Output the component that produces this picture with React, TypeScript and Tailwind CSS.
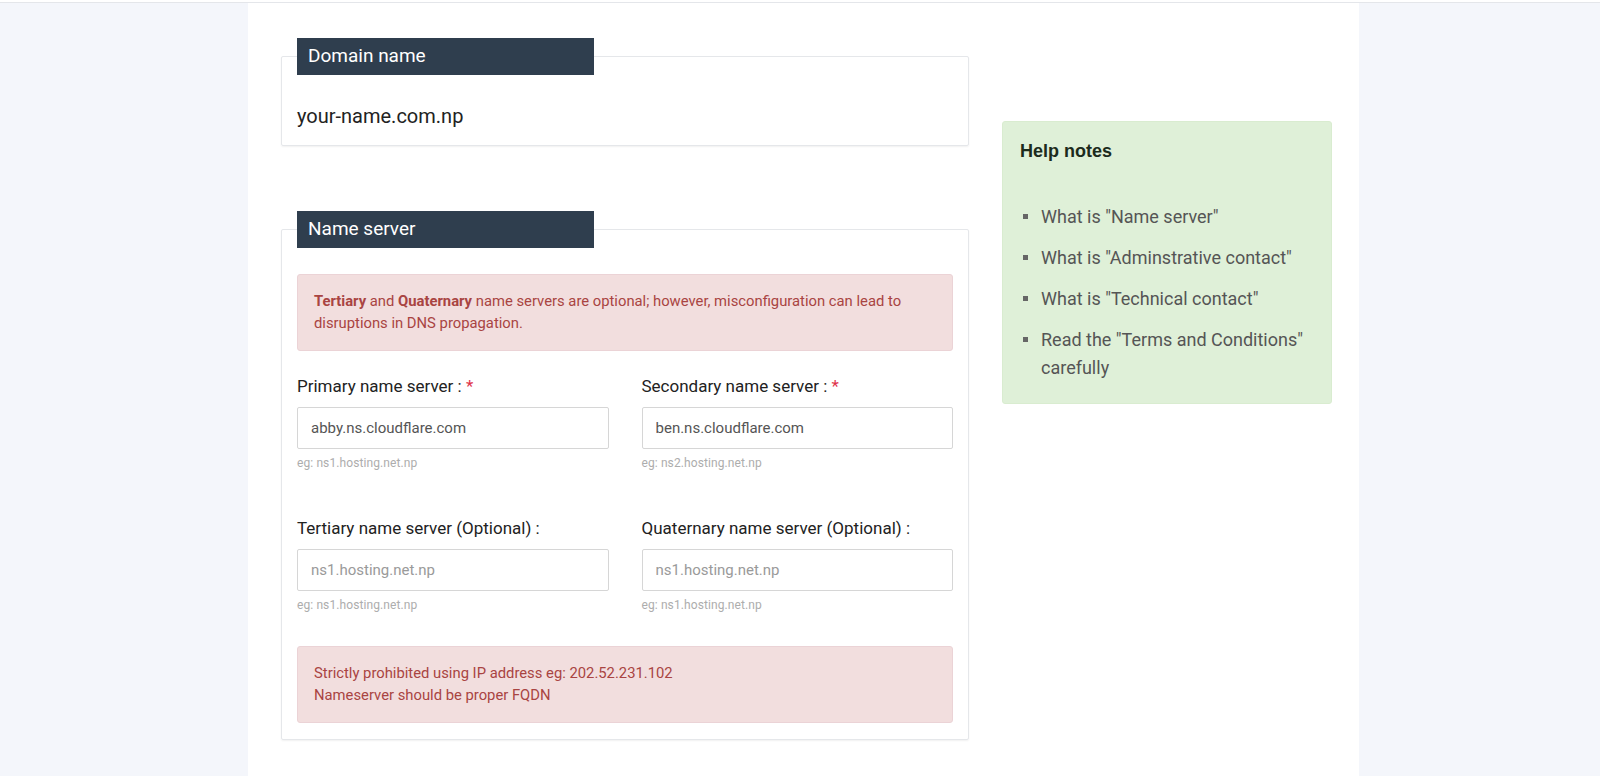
import React from 'react';

const roboto = { fontFamily: 'Roboto, "Liberation Sans", sans-serif' };

function Tab({ title }: { title: string }) {
  return (
    <div className="-mt-[19px] flex h-[37px] w-[297px] items-center bg-[#2f3e4e] pl-[11px] text-[19px] text-white">
      {title}
    </div>
  );
}

function Field({
  label,
  required,
  value,
  placeholder,
  hint,
}: {
  label: string;
  required?: boolean;
  value?: string;
  placeholder?: string;
  hint: string;
}) {
  return (
    <div className="flex flex-col">
      <label className="mb-[10px] text-[17px] leading-[21px] text-[#222]">
        {label} {required && <span className="text-[#e0334a]">*</span>}
      </label>
      <input
        readOnly
        defaultValue={value}
        placeholder={placeholder}
        className="h-[42px] rounded-[2px] border border-[#d6d6d6] bg-white px-[13px] text-[15px] text-[#555] placeholder:text-[#9a9a9a] focus:outline-none"
      />
      <span className="mt-[5px] text-[12px] leading-[18px] tracking-[0.1px] text-[#adadad]">{hint}</span>
    </div>
  );
}

const notes = [
  'What is "Name server"',
  'What is "Adminstrative contact"',
  'What is "Technical contact"',
  'Read the "Terms and Conditions" carefully',
];

export default function App() {
  return (
    <div className="flex min-h-[776px] flex-col bg-[#f4f6fb]">
      <div className="h-[3px] border-b border-[#e4e6ea] bg-white" />
      <div className="ml-[248px] flex w-[1111px] flex-1 items-start gap-[33px] bg-white pb-[40px] pl-[33px] pt-[53px]">
        {/* left column */}
        <div className="w-[688px] shrink-0" style={roboto}>
          <div className="rounded-[2px] border border-[#e5e7ea] px-[15px] pb-[16px] shadow-[0_1px_2px_rgba(0,0,0,0.06)]">
            <Tab title="Domain name" />
            <div className="mt-[29px] text-[20px] leading-[25px] text-[#222]">your-name.com.np</div>
          </div>

          <div className="mt-[83px] rounded-[2px] border border-[#e5e7ea] px-[15px] pb-[16px] shadow-[0_1px_2px_rgba(0,0,0,0.06)]">
            <Tab title="Name server" />
            <div className="mt-[26px] rounded-[3px] border border-[#ebd3d6] bg-[#f2dede] px-[16px] pb-[16px] pt-[16px] text-[14.8px] leading-[21.5px] text-[#a94442]">
              <b className="font-bold">Tertiary</b> and <b className="font-bold">Quaternary</b> name servers are optional; however, misconfiguration can lead to disruptions in DNS propagation.
            </div>

            <div className="mt-[25px] grid grid-cols-2 gap-x-[33px]">
              <Field label="Primary name server :" required value="abby.ns.cloudflare.com" hint="eg: ns1.hosting.net.np" />
              <Field label="Secondary name server :" required value="ben.ns.cloudflare.com" hint="eg: ns2.hosting.net.np" />
            </div>
            <div className="mt-[46px] grid grid-cols-2 gap-x-[33px]">
              <Field label="Tertiary name server (Optional) :" placeholder="ns1.hosting.net.np" hint="eg: ns1.hosting.net.np" />
              <Field label="Quaternary name server (Optional) :" placeholder="ns1.hosting.net.np" hint="eg: ns1.hosting.net.np" />
            </div>

            <div className="mt-[32px] rounded-[3px] border border-[#ebd3d6] bg-[#f2dede] px-[16px] pb-[16px] pt-[16px] text-[14.8px] leading-[21.5px] text-[#a94442]">
              <div>Strictly prohibited using IP address eg: 202.52.231.102</div>
              <div>Nameserver should be proper FQDN</div>
            </div>
          </div>
        </div>

        {/* right column */}
        <div className="mt-[65px] w-[330px] shrink-0 rounded-[3px] border border-[#d9ecd0] bg-[#dff0d8] pb-[22px] pl-[17px] pr-[16px] pt-[17px]">
          <h3
            className="text-[18px] font-semibold leading-[24px] text-[#1c2b1c]"
            style={{ fontFamily: '"Liberation Sans", Arial, sans-serif' }}
          >
            Help notes
          </h3>
          <ul className="mt-[40px] flex flex-col gap-[13.5px]" style={roboto}>
            {notes.map((n) => (
              <li key={n} className="flex items-start text-[18px] leading-[27.5px] text-[#555]">
                <span className="ml-[3px] mr-[13px] mt-[11px] h-[5px] w-[5px] shrink-0 bg-[#666]" />
                <span>{n}</span>
              </li>
            ))}
          </ul>
        </div>
      </div>
    </div>
  );
}
